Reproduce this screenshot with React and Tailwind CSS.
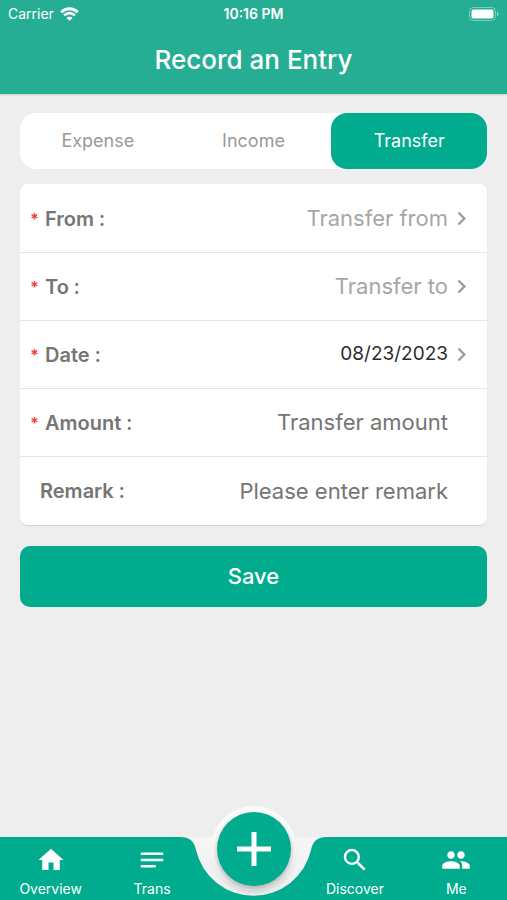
import { useState } from "react";
import {
  MdChevronRight,
  MdHome,
  MdNotes,
  MdPeople,
  MdSearch,
} from "react-icons/md";

const tabs = ["Expense", "Income", "Transfer"];

function StatusBar() {
  return (
    <div className="grid grid-cols-3 items-center px-2 pt-1 text-sm leading-5">
      <div className="flex items-center gap-1.5">
        <span>Carrier</span>
        <svg className="h-3.5 w-[19px]" viewBox="0 0 19 14" fill="none">
          <path d="M1.2 5.2a11.800 11.800 0 0 1 16.600 0" stroke="currentColor" strokeWidth="2.9" />
          <path d="M4.1 8.4a7.600 7.600 0 0 1 10.800 0" stroke="currentColor" strokeWidth="2.6" />
          <path d="M9.5 13.800 6.500 10.900a4.200 4.200 0 0 1 6 0z" fill="currentColor" />
        </svg>
      </div>
      <span className="text-center font-semibold">10:16 PM</span>
      <svg className="h-3.5 w-[30px] justify-self-end" viewBox="0 0 30 14">
        <rect x="0.5" y="0.5" width="26" height="13" rx="4" fill="none" stroke="#fff" strokeOpacity="0.4" />
        <rect x="2.5" y="2.5" width="22" height="9" rx="2" fill="#fff" />
        <path d="M28 5v4c1-.3 1.6-1.1 1.6-2S29 5.3 28 5z" fill="#fff" fillOpacity="0.5" />
      </svg>
    </div>
  );
}

function Label({ id, required, children }) {
  return (
    <label
      htmlFor={id}
      className={`flex shrink-0 items-center text-xl leading-6 font-semibold text-[#757575] ${required ? "" : "pl-2.5"}`}
    >
      {required && <span className="w-[15px] text-base leading-5 font-bold text-[#f44336]">*</span>}
      {children}
      <span
        lang="zh-TW"
        className="font-['Noto_Sans_CJK_TC',sans-serif] text-base leading-6 font-bold"
      >
        ：
      </span>
    </label>
  );
}

function PickerRow({ id, label, value, filled }) {
  return (
    <div className="flex h-[68px] items-center justify-between pl-2.5 pr-3">
      <Label id={id} required>{label}</Label>
      <button
        id={id}
        type="button"
        className={`flex flex-1 items-center justify-end ${filled ? "text-[19px] text-[#2b2b2b]" : "text-[22px] text-[#a6a6a6]"}`}
      >
        {value}
        <MdChevronRight className="size-[27px] text-[#9a9a9a]" />
      </button>
    </div>
  );
}

function InputRow({ id, label, placeholder, required }) {
  return (
    <div className="flex h-[68px] items-center justify-between pl-2.5 pr-[39px]">
      <Label id={id} required={required}>{label}</Label>
      <input
        id={id}
        type="text"
        placeholder={placeholder}
        className="min-w-0 flex-1 text-right text-[22px] text-[#2b2b2b] outline-none placeholder:text-[#757575]"
      />
    </div>
  );
}

function NavItem({ icon: Icon, label }) {
  return (
    <a href="#" className="flex flex-1 flex-col items-center pt-2 text-sm leading-5">
      <Icon className="mb-1 size-[30px]" />
      {label}
    </a>
  );
}

function BottomNav() {
  return (
    <nav className="sticky bottom-0 h-[63px] text-white">
      {/* bar with the notch cut out under the add button */}
      <div className="absolute inset-0 flex">
        <div className="flex-1 bg-[#00ab8e]" />
        <svg className="h-[63px] w-[149px]" viewBox="0 0 149 63">
          <defs>
            <linearGradient id="notch" x1="0" y1="0" x2="0" y2="1">
              <stop offset="0" stopColor="#f6f6f6" />
              <stop offset="1" stopColor="#efefef" />
            </linearGradient>
          </defs>
          <rect width="149" height="63" fill="url(#notch)" />
          <path
            d="M0 0h1C11 0 15 4 17 13A59 59 0 0 0 132 13C134 4 138 0 148 0h1v63H0z"
            fill="#00ab8e"
          />
        </svg>
        <div className="flex-1 bg-[#00ab8e]" />
      </div>
      <div className="relative flex h-full">
        <NavItem icon={MdHome} label="Overview" />
        <NavItem icon={MdNotes} label="Trans" />
        <div className="flex flex-1 justify-center">
          <button
            type="button"
            aria-label="Add"
            className="absolute -top-[31px] flex size-[85px] items-center justify-center rounded-full bg-[#fcfcfc]"
          >
            <span className="flex size-[74px] items-center justify-center rounded-full bg-[#00ab8e] shadow-[0_4px_7px_rgba(0,0,0,0.3)]">
              <svg className="size-[34px]" viewBox="0 0 34 34">
                <path d="M17 0v34M0 17h34" stroke="#fff" strokeWidth="5" />
              </svg>
            </span>
          </button>
        </div>
        <NavItem icon={MdSearch} label="Discover" />
        <NavItem icon={MdPeople} label="Me" />
      </div>
    </nav>
  );
}

export default function App() {
  const [active, setActive] = useState("Transfer");

  return (
    <div className="flex min-h-screen flex-col bg-[#eee] font-[Inter,sans-serif]">
      <header className="bg-[#26ae94] pb-[18px] text-white shadow-[0_1px_2px_rgba(0,0,0,0.15)]">
        <StatusBar />
        <h1 className="pt-5 text-center text-[26px] font-medium leading-8">Record an Entry</h1>
      </header>

      <main className="flex-1 px-5 pt-[19px]">
        <div className="flex rounded-2xl bg-white">
          {tabs.map((tab) => (
            <button
              key={tab}
              type="button"
              onClick={() => setActive(tab)}
              className={`h-14 flex-1 rounded-2xl text-lg ${active === tab ? "bg-[#00ab8e] text-white" : "text-[#999]"}`}
            >
              {tab}
            </button>
          ))}
        </div>

        <form onSubmit={(e) => e.preventDefault()}>
          <div className="mt-[15px] divide-y divide-[#e6e6e6] rounded-lg bg-white pt-px shadow-[0_1px_1px_rgba(0,0,0,0.12)]">
            <PickerRow id="from" label="From" value="Transfer from" />
            <PickerRow id="to" label="To" value="Transfer to" />
            <PickerRow id="date" label="Date" value="08/23/2023" filled />
            <InputRow id="amount" label="Amount" placeholder="Transfer amount" required />
            <InputRow id="remark" label="Remark" placeholder="Please enter remark" />
          </div>

          <button
            type="submit"
            className="mt-[21px] h-[61px] w-full rounded-[10px] bg-[#00ab8e] text-[22px] font-medium text-white"
          >
            Save
          </button>
        </form>
      </main>

      <BottomNav />
    </div>
  );
}
